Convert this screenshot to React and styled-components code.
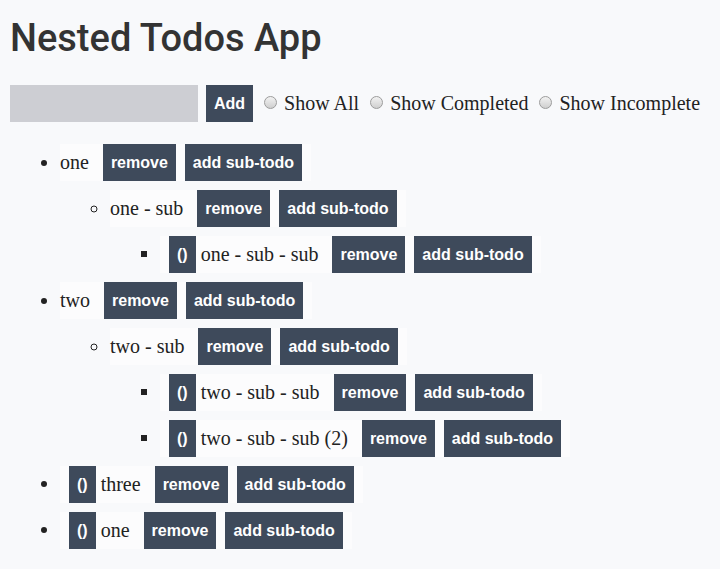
import React from 'react';
import styled, { createGlobalStyle } from 'styled-components';

const GlobalStyle = createGlobalStyle`
  body {
    margin: 0;
    background: #f8f9fb;
    color: #222;
    font-family: "Liberation Serif", "Times New Roman", serif;
  }
`;

const todos = [
  {
    id: 1,
    text: 'one',
    children: [
      {
        id: 2,
        text: 'one - sub',
        children: [{ id: 3, text: 'one - sub - sub', children: [] }],
      },
    ],
  },
  {
    id: 4,
    text: 'two',
    children: [
      {
        id: 5,
        text: 'two - sub',
        children: [
          { id: 6, text: 'two - sub - sub', children: [] },
          { id: 7, text: 'two - sub - sub (2)', children: [] },
        ],
      },
    ],
  },
  { id: 8, text: 'three', children: [] },
  { id: 9, text: 'one', children: [] },
];

const markers = ['disc', 'circle', 'square'];

const TodoItem = ({ todo, depth }) => {
  const isLeaf = todo.children.length === 0;
  return (
    <Item>
      <Row>
        {isLeaf && <ToggleButton>()</ToggleButton>}
        <Label>{todo.text}</Label>
        <Button>remove</Button>
        <Button>add sub-todo</Button>
      </Row>
      {!isLeaf && <TodoList todos={todo.children} depth={depth + 1} />}
    </Item>
  );
};

const TodoList = ({ todos, depth }) => (
  <List $marker={markers[depth] || 'square'} $top={depth === 0}>
    {todos.map(t => (
      <TodoItem key={t.id} todo={t} depth={depth} />
    ))}
  </List>
);

const App = () => {
  const [filter, setFilter] = React.useState('');
  const [text, setText] = React.useState('');

  return (
    <Page>
      <GlobalStyle />
      <Title>Nested Todos App</Title>
      <Controls>
        <TextInput value={text} onChange={(e) => setText(e.target.value)} />
        <Button>Add</Button>
        <RadioLabel>
          <Radio name="filter" checked={filter === 'all'} onChange={() => setFilter('all')} />
          Show All
        </RadioLabel>
        <RadioLabel>
          <Radio name="filter" checked={filter === 'done'} onChange={() => setFilter('done')} />
          Show Completed
        </RadioLabel>
        <RadioLabel>
          <Radio name="filter" checked={filter === 'todo'} onChange={() => setFilter('todo')} />
          Show Incomplete
        </RadioLabel>
      </Controls>
      <TodoList todos={todos} depth={0} />
    </Page>
  );
};

export default App;

const Page = styled.div`
  padding: 10px;
`;

const Title = styled.h1`
  margin: 4px 0 23px;
  font-family: Roboto, "Open Sans", sans-serif;
  font-weight: 500;
  font-size: 38px;
  line-height: 48px;
  color: #333;
`;

const Controls = styled.div`
  display: flex;
  align-items: center;
`;

const TextInput = styled.input`
  width: 188px;
  height: 37px;
  box-sizing: border-box;
  border: none;
  background: #cdced3;
  margin-right: 8px;
`;

const Button = styled.button`
  height: 37px;
  box-sizing: border-box;
  border: none;
  border-radius: 0;
  background: #3e4a5b;
  color: #fff;
  font-family: "Liberation Sans", Arial, sans-serif;
  font-weight: bold;
  font-size: 16px;
  line-height: 19px;
  padding: 0 8px;
  margin-right: 9px;
  cursor: pointer;
`;

const ToggleButton = styled(Button)`
  margin-left: 9px;
  margin-right: 5px;
`;

const RadioLabel = styled.label`
  display: flex;
  align-items: center;
  font-size: 20px;
  margin-left: 2px;
  margin-right: 9px;
`;

const Radio = styled.input.attrs({ type: 'radio' })`
  appearance: none;
  width: 13px;
  height: 13px;
  margin: 0 7px 3px 0;
  border-radius: 50%;
  border: 1px solid #9c9c9c;
  background: linear-gradient(#f2f2f2, #cfcfcf);
  box-sizing: border-box;
`;

const List = styled.ul`
  list-style: ${p => p.$marker};
  margin: ${p => (p.$top ? '22px 0 0' : '0')};
  padding-left: 50px;
  font-family: "Liberation Serif", "Times New Roman", serif;
  font-size: 20px;
`;

const Item = styled.li`
  color: #222;
`;

const Row = styled.div`
  display: flex;
  align-items: center;
  width: max-content;
  background: #fcfcfd;
  margin-bottom: 9px;
`;

const Label = styled.span`
  margin-right: 14px;
`;
